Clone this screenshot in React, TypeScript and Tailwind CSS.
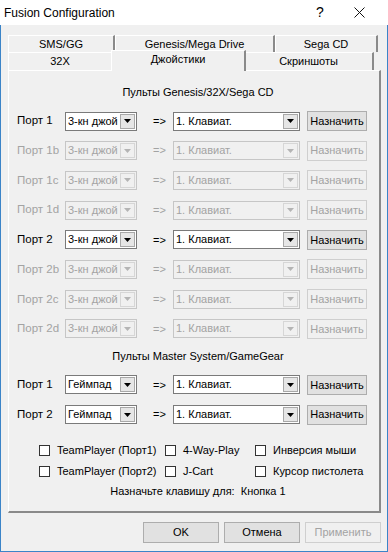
const font = { fontFamily: '"Liberation Sans", Arial, sans-serif' }

function Arrow({ disabled }: { disabled?: boolean }) {
  return (
    <svg width="7" height="4" viewBox="0 0 7 4">
      <path d="M0 0h7L3.5 4z" fill={disabled ? '#b4b4b4' : '#000'} />
    </svg>
  )
}

function Combo({ value, width, disabled }: { value: string; width: string; disabled?: boolean }) {
  return (
    <div
      className={`flex h-[19px] items-stretch border ${width} ${
        disabled ? 'border-[#c6c6c6] bg-[#f0f0f0] text-[#a3a3a3]' : 'border-[#7a7a7a] bg-white text-black'
      }`}
    >
      <span className="flex-1 overflow-hidden whitespace-nowrap pl-[2px] leading-[17px]">{value}</span>
      <span
        className={`m-[1px] flex w-[15px] items-center justify-center border ${
          disabled ? 'border-[#d6d6d6] bg-[#f0f0f0]' : 'border-[#a8a8a8] bg-[#e6e6e6]'
        }`}
      >
        <Arrow disabled={disabled} />
      </span>
    </div>
  )
}

function AssignButton({ disabled }: { disabled?: boolean }) {
  return (
    <div
      className={`flex h-[20px] w-[60px] items-center justify-center border ${
        disabled ? 'border-[#cfcfcf] bg-[#f0f0f0] text-[#a3a3a3]' : 'border-[#adadad] bg-[#e1e1e1] text-black'
      }`}
    >
      Назначить
    </div>
  )
}

function PortRow({ label, first, disabled }: { label: string; first: string; disabled?: boolean }) {
  return (
    <div className="flex h-[20px] items-center">
      <span className={`w-[48px] text-[11.5px] ${disabled ? 'text-[#a3a3a3]' : 'text-black'}`}>{label}</span>
      <Combo value={first} width="w-[72px]" disabled={disabled} />
      <span className={`w-[36px] pl-[16px] ${disabled ? 'text-[#a3a3a3]' : 'text-black'}`}>=&gt;</span>
      <Combo value="1. Клавиат." width="w-[127px]" disabled={disabled} />
      <span className="w-[7px]" />
      <AssignButton disabled={disabled} />
    </div>
  )
}

function Check({ label }: { label: string }) {
  return (
    <div className="flex h-[16px] items-center whitespace-nowrap">
      <span className="h-[11px] w-[11px] shrink-0 border border-[#333] bg-white" />
      <span className="pl-[7px]">{label}</span>
    </div>
  )
}

function Tab({ label, width, selected }: { label: string; width: string; selected?: boolean }) {
  if (selected) {
    return (
      <div
        className={`relative z-10 -mx-[2px] -mt-[2px] -mb-[1px] flex h-[21px] items-center justify-center border-l border-t border-r-2 border-l-white border-t-white border-r-[#8a8a8a] bg-[#f0f0f0] pb-[4px] ${width}`}
      >
        {label}
      </div>
    )
  }
  return (
    <div
      className={`flex h-full items-center justify-center border-l border-t border-r-2 border-l-white border-t-white border-r-[#8a8a8a] ${width}`}
    >
      {label}
    </div>
  )
}

export default function App() {
  return (
    <div className="h-[552px] w-[388px] bg-[#f0f0f0] text-[11px] text-black" style={font}>
      <div className="flex h-[25px] items-center bg-white pl-[4px] text-[12px]">
        <span className="flex-1">Fusion Configuration</span>
        <span className="w-[20px] text-center text-[14px]">?</span>
        <span className="flex w-[58px] items-center justify-center">
          <svg width="11" height="11" viewBox="0 0 11 11">
            <path d="M0.5 0.5l10 10M10.5 0.5l-10 10" stroke="#111" strokeWidth="1" />
          </svg>
        </span>
      </div>
      <div className="flex h-[527px] flex-col border-x border-b border-[#3b84c8] pl-[7px] pr-[6px] pt-[10px]">
        <div className="flex h-[17px] w-[370px]">
          <Tab label="SMS/GG" width="w-[107px]" />
          <Tab label="Genesis/Mega Drive" width="w-[160px]" />
          <Tab label="Sega CD" width="w-[103px]" />
        </div>
        <div className="flex h-[18px] w-[370px]">
          <Tab label="32X" width="w-[105px]" />
          <Tab label="Джойстики" width="w-[135px]" selected />
          <Tab label="Скриншоты" width="w-[130px]" />
        </div>
        <div className="flex h-[443px] flex-col border-l border-t border-r-2 border-b-2 border-l-white border-t-white border-r-[#8a8a8a] border-b-[#8a8a8a] pl-[8px] pt-[14px]">
          <div className="h-[14px] text-center leading-[14px]">Пульты Genesis/32X/Sega CD</div>
          <div className="mt-[12px] flex flex-col gap-[9.7px]">
            <PortRow label="Порт 1" first="3-кн джой" />
            <PortRow label="Порт 1b" first="3-кн джой" disabled />
            <PortRow label="Порт 1c" first="3-кн джой" disabled />
            <PortRow label="Порт 1d" first="3-кн джой" disabled />
            <PortRow label="Порт 2" first="3-кн джой" />
            <PortRow label="Порт 2b" first="3-кн джой" disabled />
            <PortRow label="Порт 2c" first="3-кн джой" disabled />
            <PortRow label="Порт 2d" first="3-кн джой" disabled />
          </div>
          <div className="mt-[10px] h-[14px] text-center leading-[14px]">Пульты Master System/GameGear</div>
          <div className="mt-[12px] flex flex-col gap-[9.7px]">
            <PortRow label="Порт 1" first="Геймпад" />
            <PortRow label="Порт 2" first="Геймпад" />
          </div>
          <div className="mt-[18px] grid grid-cols-[126px_90px_1fr] gap-y-[5px] pl-[22px]">
            <Check label="TeamPlayer (Порт1)" />
            <Check label="4-Way-Play" />
            <Check label="Инверсия мыши" />
            <Check label="TeamPlayer (Порт2)" />
            <Check label="J-Cart" />
            <Check label="Курсор пистолета" />
          </div>
          <div className="mt-[4px] h-[14px] text-center leading-[14px]">Назначьте клавишу для:&nbsp; Кнопка 1</div>
        </div>
        <div className="mt-[9px] flex justify-end gap-[5px]">
          <div className="flex h-[21px] w-[76px] items-center justify-center border border-[#adadad] bg-[#e1e1e1]">OK</div>
          <div className="flex h-[21px] w-[76px] items-center justify-center border border-[#adadad] bg-[#e1e1e1]">Отмена</div>
          <div className="flex h-[21px] w-[76px] items-center justify-center border border-[#cfcfcf] bg-[#f0f0f0] text-[#a3a3a3]">
            Применить
          </div>
        </div>
      </div>
    </div>
  )
}
